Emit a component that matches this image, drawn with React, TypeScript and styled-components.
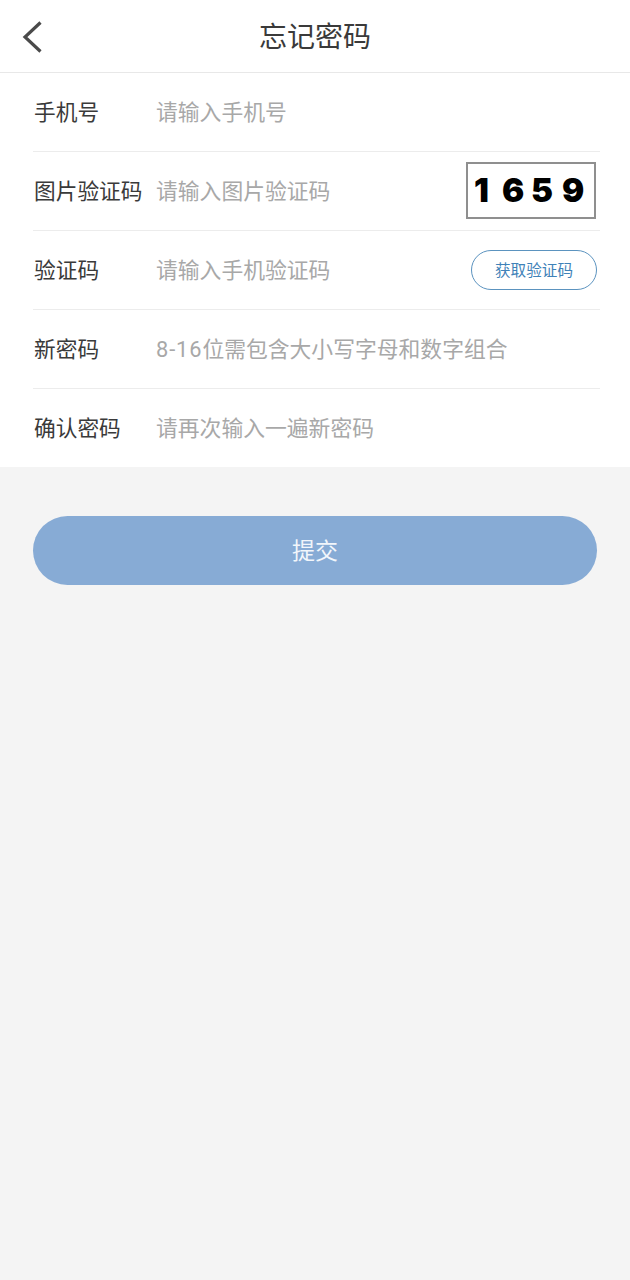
import React from "react";
import styled, { createGlobalStyle } from "styled-components";

const Global = createGlobalStyle`
  html, body { margin: 0; padding: 0; background: #f4f4f4; }
  body { font-family: Roboto, "Noto Sans CJK SC", "Noto Sans", sans-serif; }
`;

const Page = styled.div`
  width: 630px;
  height: 1280px;
  background: #f4f4f4;
  overflow: hidden;
`;

const Header = styled.header`
  position: relative;
  height: 72px;
  background: #fff;
  border-bottom: 1px solid #e8e8e8;
  display: flex;
  align-items: center;
  justify-content: center;
`;

const BackButton = styled.button`
  position: absolute;
  left: 20px;
  top: 20px;
  width: 24px;
  height: 34px;
  padding: 0;
  border: 0;
  background: none;
  display: block;
`;

const Title = styled.h1`
  margin: 0;
  padding-top: 4px;
  font-size: 28px;
  font-weight: 400;
  line-height: 36px;
  color: #3a3a3a;
`;

const Form = styled.div`
  background: #fff;
  padding-top: 0.5px;
`;

const Row = styled.div<{ $last?: boolean }>`
  height: ${(p) => (p.$last ? 78 : 78.9)}px;
  margin-left: 33px;
  margin-right: 30px;
  display: flex;
  align-items: center;
  box-sizing: border-box;
  border-bottom: ${(p) => (p.$last ? "none" : "1px solid #ececec")};
`;

const Label = styled.span`
  width: 122px;
  flex: none;
  padding: 0 0 4px 1px;
  font-size: 21.7px;
  color: #3a3a3a;
  white-space: nowrap;
`;

const Placeholder = styled.span`
  flex: 1;
  padding-bottom: 4px;
  font-size: 21.8px;
  color: #a8a8a8;
  white-space: nowrap;
`;

const Digits = styled.span`
  letter-spacing: 0.9px;
`;

const Captcha = styled.div`
  flex: none;
  width: 130px;
  height: 57px;
  margin: 0 4px 2px 0;
  box-sizing: border-box;
  border: 2px solid #8f8f8f;
  display: grid;
  grid-template-columns: 28px 29px 31px auto;
  align-items: center;
  padding-left: 6px;
  font-family: Inter, sans-serif;
  font-weight: 900;
  font-size: 33px;
  color: #000;
`;

const CodeButton = styled.button`
  flex: none;
  width: 126px;
  height: 40px;
  margin-right: 3px;
  padding: 0 0 2px;
  border: 1px solid #5b93bf;
  border-radius: 20px;
  background: #fff;
  color: #3f82b8;
  font-family: inherit;
  font-size: 15.6px;
`;

const Submit = styled.button`
  display: block;
  width: 564px;
  height: 69px;
  margin: 49px 33px 0;
  padding: 0 0 4px;
  border: 0;
  border-radius: 35px;
  background: #87abd5;
  color: #f2f6fb;
  font-family: inherit;
  font-size: 23px;
`;

export default function App() {
  return (
    <Page>
      <Global />
      <Header>
        <BackButton aria-label="back">
          <svg width="24" height="34" viewBox="0 0 24 34" fill="none">
            <path d="M20.5 2.5 L5 17 L20.5 31.5" stroke="#4a4a4a" strokeWidth="3.2" />
          </svg>
        </BackButton>
        <Title>忘记密码</Title>
      </Header>
      <Form>
        <Row>
          <Label>手机号</Label>
          <Placeholder>请输入手机号</Placeholder>
        </Row>
        <Row>
          <Label>图片验证码</Label>
          <Placeholder>请输入图片验证码</Placeholder>
          <Captcha>
            <span>1</span>
            <span>6</span>
            <span>5</span>
            <span>9</span>
          </Captcha>
        </Row>
        <Row>
          <Label>验证码</Label>
          <Placeholder>请输入手机验证码</Placeholder>
          <CodeButton>获取验证码</CodeButton>
        </Row>
        <Row>
          <Label>新密码</Label>
          <Placeholder><Digits>8-16</Digits>位需包含大小写字母和数字组合</Placeholder>
        </Row>
        <Row $last>
          <Label>确认密码</Label>
          <Placeholder>请再次输入一遍新密码</Placeholder>
        </Row>
      </Form>
      <Submit>提交</Submit>
    </Page>
  );
}
